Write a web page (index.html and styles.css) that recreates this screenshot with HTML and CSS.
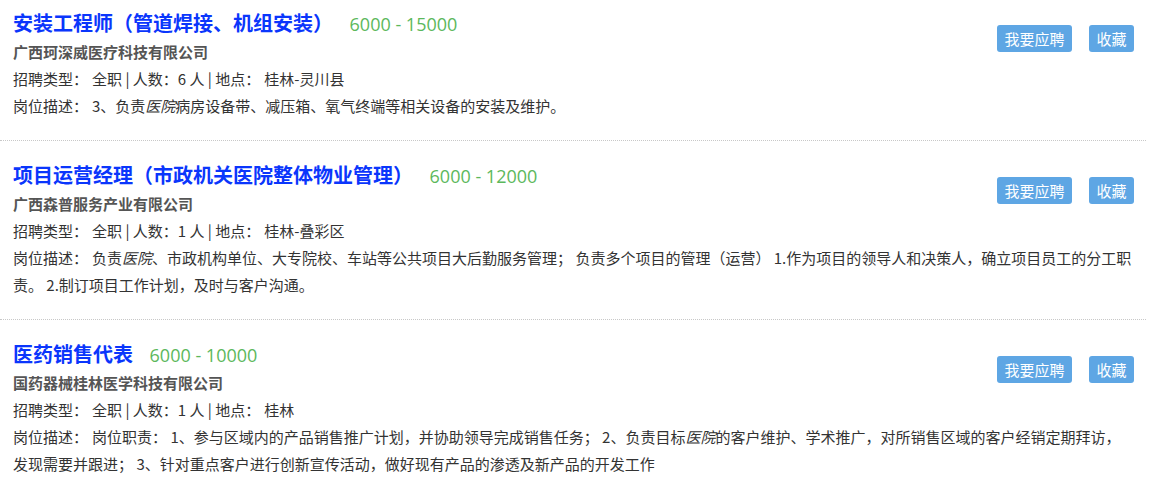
FILE: index.html
```html
<!DOCTYPE html>
<html lang="zh-CN">
    <head>
        <meta charset="UTF-8">
        <meta name="viewport" content="width=device-width, initial-scale=1.0">
        <link rel="stylesheet" href="styles.css">
        <title>职位列表</title>
    </head>

    <body>
        <ul class="job-list">
            <li class="job">
                <div class="job-actions">
                    <a href="#" class="btn">我要应聘</a>
                    <a href="#" class="btn">收藏</a>
                </div>
                <h3 class="job-title">
                    <a href="#">安装工程师（管道焊接、机组安装）</a>
                    <span class="salary">6000 - 15000</span>
                </h3>
                <p class="company">广西珂深威医疗科技有限公司</p>
                <p class="job-info"><span class="label">招聘类型：</span>全职 | 人数：6 人 | 地点：<span class="place">桂林-灵川县</span></p>
                <p class="job-desc"><span class="label">岗位描述：</span>3、负责<em>医院</em>病房设备带、减压箱、氧气终端等相关设备的安装及维护。</p>
            </li>
            <li class="job">
                <div class="job-actions">
                    <a href="#" class="btn">我要应聘</a>
                    <a href="#" class="btn">收藏</a>
                </div>
                <h3 class="job-title">
                    <a href="#">项目运营经理（市政机关医院整体物业管理）</a>
                    <span class="salary">6000 - 12000</span>
                </h3>
                <p class="company">广西森普服务产业有限公司</p>
                <p class="job-info"><span class="label">招聘类型：</span>全职 | 人数：1 人 | 地点：<span class="place">桂林-叠彩区</span></p>
                <p class="job-desc"><span class="label">岗位描述：</span>负责<em>医院</em>、市政机构单位、大专院校、车站等公共项目大后勤服务管理； 负责多个项目的管理（运营） 1.作为项目的领导人和决策人，确立项目员工的分工职责。 2.制订项目工作计划，及时与客户沟通。</p>
            </li>
            <li class="job">
                <div class="job-actions">
                    <a href="#" class="btn">我要应聘</a>
                    <a href="#" class="btn">收藏</a>
                </div>
                <h3 class="job-title">
                    <a href="#">医药销售代表</a>
                    <span class="salary">6000 - 10000</span>
                </h3>
                <p class="company">国药器械桂林医学科技有限公司</p>
                <p class="job-info"><span class="label">招聘类型：</span>全职 | 人数：1 人 | 地点：<span class="place">桂林</span></p>
                <p class="job-desc"><span class="label">岗位描述：</span>岗位职责： 1、参与区域内的产品销售推广计划，并协助领导完成销售任务； 2、负责目标<em>医院</em>的客户维护、学术推广，对所销售区域的客户经销定期拜访，<span class="nowrap">发现需要并跟进；</span> 3、针对重点客户进行创新宣传活动，做好现有产品的渗透及新产品的开发工作</p>
            </li>
        </ul>
    </body>
</html>
```

FILE: styles.css
```css
* { box-sizing: border-box; }

body {
    margin: 0;
    background-color: #fff;
    font-family: "Microsoft YaHei", "Noto Sans CJK SC", sans-serif;
    font-size: 15px; color: #333;
}

.job-list {
    width: 1146px;
    margin: 0; padding: 0;
    list-style: none;
}

.job {
    padding: 19px 7px 21px 13px;
    border-bottom: 1px dotted #c8c8c8;
}

.job:first-child { padding-top: 8px; }

.job-actions {
    float: right;
    display: flex; gap: 17px;
    margin: 17px 5px 0 0;
}

.btn {
    display: block; height: 27px; padding: 0 7.5px;
    line-height: 27px; font-size: 15px;
    color: #fff; text-decoration: none;
    background-color: #5ea6e4; border-radius: 3px;
}

.job-title {
    margin: 0; height: 30px; line-height: 30px;
    font-size: 20px; font-weight: bold;
}

.job-title a { color: #0a36fc; text-decoration: none; }

.salary {
    margin-left: 12px; line-height: 1;
    font-family: "Segoe UI", "Open Sans", sans-serif;
    font-size: 18px; font-weight: normal; color: #5cb85c;
}

.company, .job-info, .job-desc { margin: 0; line-height: 27px; }

.company { font-weight: bold; color: #555; }

.label { margin-right: 4px; }

.place { margin-left: 4px; }

.nowrap { white-space: nowrap; }

.job-desc em { font-style: italic; }
```
